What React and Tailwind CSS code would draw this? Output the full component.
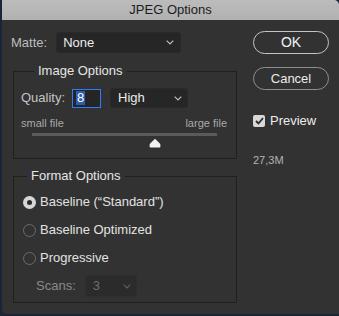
import React from "react";

const font = { fontFamily: '"Liberation Sans", Arial, sans-serif' };

function Chevron({ color = "#bdbdbd" }) {
  return (
    <svg width="8" height="5" viewBox="0 0 8 5" className="shrink-0">
      <polyline points="0.7,0.7 4,4 7.3,0.7" fill="none" stroke={color} strokeWidth="1.2" />
    </svg>
  );
}

function Radio({ checked, label }) {
  return (
    <div className="flex h-[20px] items-center">
      <div className="ml-[9px] flex h-[13px] w-[13px] items-center justify-center rounded-full">
        {checked ? (
          <div className="flex h-[13px] w-[13px] items-center justify-center rounded-full bg-[#d6d6d6]">
            <div className="h-[5px] w-[5px] rounded-full bg-[#2a2a2a]" />
          </div>
        ) : (
          <div className="h-[13px] w-[13px] rounded-full border border-[#6b6b6b]" />
        )}
      </div>
      <span className="ml-[4px] text-[13px] text-[#e2e2e2]">{label}</span>
    </div>
  );
}

export default function App() {
  return (
    <div className="h-[316px] w-[339px] overflow-hidden bg-[#1a2638]" style={font}>
      <div className="ml-[2px] flex h-[314px] w-[337px] flex-col overflow-hidden rounded-tr-[5px] rounded-bl-[5px] bg-[#323232]">
        <div className="flex h-[20px] shrink-0 items-center justify-center bg-gradient-to-b from-[#bcbcbc] to-[#b1b1b1] text-[13px] text-[#1c1c1c]">
          JPEG Options
        </div>
        <div className="flex flex-1">
          <div className="w-[251px] pl-[9px]">
            <div className="mt-[12px] flex items-center">
              <span className="text-[13px] text-[#bdbdbd]">Matte:</span>
              <div className="ml-[9px] flex h-[21px] w-[125px] items-center justify-between rounded-[3px] border border-[#2a2a2a] bg-[#262626] pl-[6px] pr-[6px]">
                <span className="text-[13px] text-[#ececec]">None</span>
                <Chevron />
              </div>
            </div>

            <fieldset className="ml-[2px] mt-[10px] w-[224px] border border-[#202020] px-[7px] pb-[10px]">
              <legend className="ml-[13px] px-[4px] text-[13px] leading-[16px] text-[#e6e6e6]">Image Options</legend>
              <div className="mt-[9px] flex items-center">
                <span className="text-[13px] text-[#c4c4c4]">Quality:</span>
                <div className="ml-[7px] flex h-[19px] w-[29px] items-center border-[1.5px] border-[#2f7df6] bg-[#252525] pl-[3px]">
                  <span className="bg-[#2c5fae] px-[1px] text-[13px] leading-[14px] text-white">8</span>
                </div>
                <div className="ml-[9px] flex h-[20px] w-[78px] items-center justify-between rounded-[3px] border border-[#2a2a2a] bg-[#262626] pl-[7px] pr-[5px]">
                  <span className="text-[13px] text-[#ececec]">High</span>
                  <Chevron />
                </div>
              </div>
              <div className="mt-[8px] flex w-[206px] justify-between text-[11px] leading-[14px] text-[#a9a9a9]">
                <span>small file</span>
                <span>large file</span>
              </div>
              <div className="ml-[11px] mt-[3px] h-[3px] w-[185px] bg-[#5b5b5b]" />
              <div className="ml-[128px] mt-[2px] h-[10px] w-[12px]">
                <svg width="12" height="10" viewBox="0 0 12 10">
                  <path d="M6 0.8 L10.6 5.2 Q11.4 6 11.4 7 L11.4 8.4 Q11.4 9.4 10.4 9.4 L1.6 9.4 Q0.6 9.4 0.6 8.4 L0.6 7 Q0.6 6 1.4 5.2 Z" fill="#f2f2f2" />
                </svg>
              </div>
            </fieldset>

            <fieldset className="ml-[2px] mt-[9px] w-[224px] border border-[#202020] pb-[5px]">
              <legend className="ml-[13px] px-[4px] text-[13px] leading-[16px] text-[#e6e6e6]">Format Options</legend>
              <div className="mt-[8px] flex flex-col gap-[8px]">
                <Radio checked label="Baseline (“Standard”)" />
                <Radio label="Baseline Optimized" />
                <Radio label="Progressive" />
              </div>
              <div className="mt-[7px] flex items-center">
                <span className="ml-[22px] text-[13px] text-[#8a8a8a]">Scans:</span>
                <div className="ml-[9px] flex h-[22px] w-[52px] items-center justify-between rounded-[3px] border border-[#2e2e2e] bg-[#2b2b2b] pl-[7px] pr-[5px]">
                  <span className="text-[13px] text-[#6f6f6f]">3</span>
                  <Chevron color="#5e5e5e" />
                </div>
              </div>
            </fieldset>
          </div>

          <div className="flex flex-col">
            <div className="mt-[11px] flex h-[23px] w-[76px] items-center justify-center rounded-full border-[1.5px] border-[#c4c4c4] text-[14px] text-[#f2f2f2]">
              OK
            </div>
            <div className="mt-[13px] flex h-[23px] w-[76px] items-center justify-center rounded-full border border-[#8e8e8e] text-[13px] text-[#ececec]">
              Cancel
            </div>
            <div className="mt-[21px] flex items-center">
              <div className="flex h-[12px] w-[12px] items-center justify-center rounded-[2px] bg-[#d8d8d8]">
                <svg width="9" height="8" viewBox="0 0 9 8">
                  <polyline points="1,4 3.5,6.5 8,1" fill="none" stroke="#2a2a2a" strokeWidth="1.8" />
                </svg>
              </div>
              <span className="ml-[5px] text-[13px] text-[#ececec]">Preview</span>
            </div>
            <div className="mt-[21px] text-[11px] text-[#b3b3b3]">27,3M</div>
          </div>
        </div>
      </div>
    </div>
  );
}
